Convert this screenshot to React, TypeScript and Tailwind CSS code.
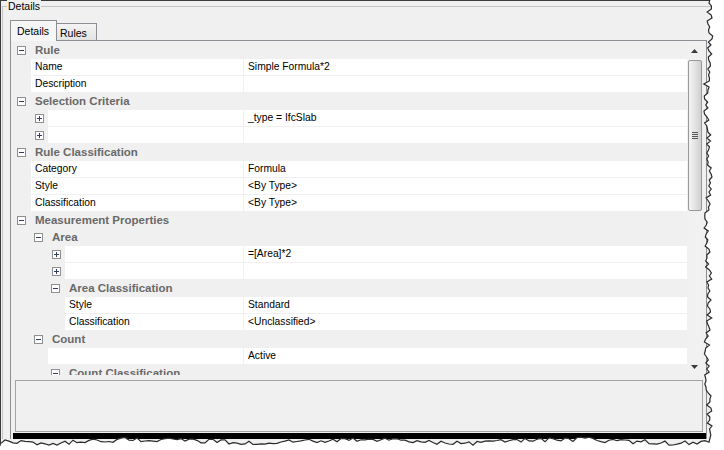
import React from "react"

type Row =
  | { kind: "header"; level: number; text: string }
  | { kind: "prop"; level: number; label: string; value: string; expandable?: boolean }

const rows: Row[] = [
  { kind: "header", level: 0, text: "Rule" },
  { kind: "prop", level: 1, label: "Name", value: "Simple Formula*2" },
  { kind: "prop", level: 1, label: "Description", value: "" },
  { kind: "header", level: 0, text: "Selection Criteria" },
  { kind: "prop", level: 1, label: "", value: "_type = IfcSlab", expandable: true },
  { kind: "prop", level: 1, label: "", value: "", expandable: true },
  { kind: "header", level: 0, text: "Rule Classification" },
  { kind: "prop", level: 1, label: "Category", value: "Formula" },
  { kind: "prop", level: 1, label: "Style", value: "<By Type>" },
  { kind: "prop", level: 1, label: "Classification", value: "<By Type>" },
  { kind: "header", level: 0, text: "Measurement Properties" },
  { kind: "header", level: 1, text: "Area" },
  { kind: "prop", level: 2, label: "", value: "=[Area]*2", expandable: true },
  { kind: "prop", level: 2, label: "", value: "", expandable: true },
  { kind: "header", level: 2, text: "Area Classification" },
  { kind: "prop", level: 3, label: "Style", value: "Standard" },
  { kind: "prop", level: 3, label: "Classification", value: "<Unclassified>" },
  { kind: "header", level: 1, text: "Count" },
  { kind: "prop", level: 2, label: "", value: "Active" },
  { kind: "header", level: 2, text: "Count Classification" },
]

// left gutter widths, per level
const headerPad = ["w-[4px]", "w-[21px]", "w-[38px]"]
const gutter = ["w-[1px]", "w-[18px]", "w-[35px]", "w-[52px]"]

function Expander({ open }: { open: boolean }) {
  return (
    <div className="relative w-[9px] h-[9px] shrink-0 border border-[#8f8f8f] bg-white">
      <div className="absolute left-[1px] top-[3px] w-[5px] h-px bg-[#2f3f5f]" />
      {!open && <div className="absolute left-[3px] top-[1px] w-px h-[5px] bg-[#2f3f5f]" />}
    </div>
  )
}

function GridRow({ row }: { row: Row }) {
  if (row.kind === "header") {
    return (
      <div className="flex h-[17px] pt-px items-center">
        <div className={headerPad[row.level] + " shrink-0"} />
        <Expander open />
        <span className="ml-[9px] text-[11.5px] font-bold text-[#696969] leading-[16px] whitespace-nowrap">
          {row.text}
        </span>
      </div>
    )
  }
  const g = row.expandable ? row.level + 1 : row.level
  return (
    <div className="flex h-[17px] pt-px">
      <div className="flex w-[230px] shrink-0">
        <div className={gutter[g] + " shrink-0 flex items-center justify-end pr-[4px]"}>
          {row.expandable && <Expander open={false} />}
        </div>
        <div className="flex-1 bg-white pl-[4px] leading-[16px] whitespace-nowrap">{row.label}</div>
      </div>
      <div className="w-px" />
      <div className="flex-1 bg-white pl-[4px] leading-[16px] whitespace-nowrap">{row.value}</div>
    </div>
  )
}

function ScrollBar() {
  return (
    <div className="w-[15px] h-[334px] bg-[#f1f1f1] flex flex-col items-center">
      <div className="h-[19px] w-full flex items-center justify-center">
        <svg width="7" height="4" viewBox="0 0 7 4">
          <polygon points="3.5,0 7,4 0,4" fill="#3a3a3a" />
        </svg>
      </div>
      <div className="w-[14px] h-[151px] rounded-[2px] border border-[#999] bg-gradient-to-r from-[#f4f4f4] via-[#e4e4e4] to-[#cfcfcf] flex flex-col items-center justify-center gap-px">
        <div className="w-[6px] h-px bg-[#555]" />
        <div className="w-[6px] h-px bg-[#555]" />
        <div className="w-[6px] h-px bg-[#555]" />
        <div className="w-[6px] h-px bg-[#555]" />
      </div>
      <div className="flex-1" />
      <div className="h-[17px] w-full flex items-center justify-center">
        <svg width="7" height="4" viewBox="0 0 7 4">
          <polygon points="0,0 7,0 3.5,4" fill="#3a3a3a" />
        </svg>
      </div>
    </div>
  )
}

const rnd = (i: number) => {
  const s = Math.sin(i * 127.1 + 311.7) * 43758.5453
  return s - Math.floor(s)
}

function TornEdge() {
  const pts: [number, number][] = []
  for (let y = 0; y <= 436; y += 3) {
    pts.push([708 + Math.sin(y / 21) * 1.8 + (rnd(y) - 0.5) * 6, y])
  }
  for (let x = 709; x >= 0; x -= 4) {
    pts.push([x, 441 + Math.sin(x / 33) * 1.8 + (rnd(x + 1000) - 0.5) * 5])
  }
  const line = pts.map((p) => p[0].toFixed(1) + "," + p[1].toFixed(1)).join(" ")
  const fill = line + " 0,450 724,450 724,0"
  return (
    <svg className="absolute inset-0 pointer-events-none" width="724" height="450" viewBox="0 0 724 450">
      <polygon points={fill} fill="#ffffff" />
      <polyline points={line} fill="none" stroke="#2a2a2a" strokeWidth="1.2" />
    </svg>
  )
}

export default function App() {
  return (
    <div className="relative w-[724px] h-[450px] bg-white overflow-hidden font-['Liberation_Sans',Arial,sans-serif] text-[10.3px] text-black">
      <div className="w-[714px] h-[446px] bg-[#f0f0f0] border-t border-l border-[#3c3c3c]">
        {/* group box */}
        <div className="relative ml-[1px] mt-[5px] border-t border-l border-[#c4c4c4]">
          <span className="absolute left-[4px] -top-[7px] px-px bg-[#f0f0f0] text-[10.5px] leading-[12px]">
            Details
          </span>

          {/* tabs */}
          <div className="flex items-end pl-[7px] pt-[13px]">
            <div className="relative z-10 -mb-px w-[47px] h-[21px] border-t border-l border-r border-[#8c8e94] bg-[#f6f6f6] pl-[6px] pt-[4px] text-[10.5px] leading-[12px]">
              Details
            </div>
            <div className="w-[40px] h-[17px] border-t border-r border-[#8c8e94] bg-gradient-to-b from-[#f4f4f4] to-[#e3e3e3] pl-[3px] pt-[3px] text-[10.5px] leading-[12px]">
              Rules
            </div>
          </div>

          {/* tab panel */}
          <div className="ml-[7px] w-[697px] border-t border-l border-r border-[#8c8e94] pl-[2px]">
            <div className="flex">
              <div className="w-[674px] h-[334px] overflow-hidden bg-[#f0f0f0]">
                {rows.map((r, i) => (
                  <GridRow key={i} row={r} />
                ))}
              </div>
              <ScrollBar />
            </div>
            <div className="mt-[5px] ml-[2px] w-[688px] h-[52px] border border-[#a3a3a3] bg-[#f0f0f0]" />
            <div className="mt-[1px] h-[6px] bg-black" />
          </div>
        </div>
      </div>
      <TornEdge />
    </div>
  )
}
